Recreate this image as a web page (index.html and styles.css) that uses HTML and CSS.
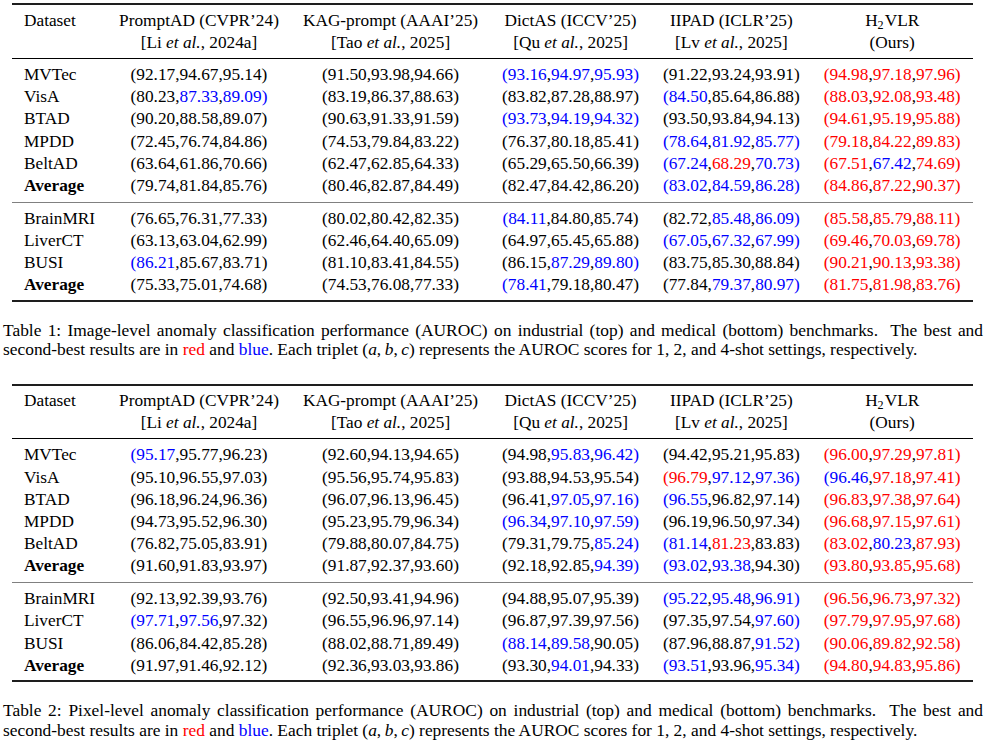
FILE: index.html
```html
<!DOCTYPE html>
<html lang="en">
<head>
<meta charset="utf-8">
<title>Anomaly classification results</title>
<link rel="stylesheet" href="styles.css">
</head>
<body>
<main class="page">

<figure class="fig">
<table class="results">
<thead>
<tr>
<th class="ds">Dataset</th>
<th>PromptAD (CVPR’24)<br>[Li <i>et al.</i>, 2024a]</th>
<th>KAG-prompt (AAAI’25)<br>[Tao <i>et al.</i>, 2025]</th>
<th>DictAS (ICCV’25)<br>[Qu <i>et al.</i>, 2025]</th>
<th>IIPAD (ICLR’25)<br>[Lv <i>et al.</i>, 2025]</th>
<th>H<sub>2</sub>VLR<br>(Ours)</th>
</tr>
</thead>
<tbody class="ind">
<tr><td class="ds">MVTec</td><td>(92.17,94.67,95.14)</td><td>(91.50,93.98,94.66)</td><td><span class="b">(93.16</span>,<span class="b">94.97</span>,<span class="b">95.93)</span></td><td>(91.22,93.24,93.91)</td><td><span class="r">(94.98</span>,<span class="r">97.18</span>,<span class="r">97.96)</span></td></tr>
<tr><td class="ds">VisA</td><td>(80.23,<span class="b">87.33</span>,<span class="b">89.09)</span></td><td>(83.19,86.37,88.63)</td><td>(83.82,87.28,88.97)</td><td><span class="b">(84.50</span>,85.64,86.88)</td><td><span class="r">(88.03</span>,<span class="r">92.08</span>,<span class="r">93.48)</span></td></tr>
<tr><td class="ds">BTAD</td><td>(90.20,88.58,89.07)</td><td>(90.63,91.33,91.59)</td><td><span class="b">(93.73</span>,<span class="b">94.19</span>,<span class="b">94.32)</span></td><td>(93.50,93.84,94.13)</td><td><span class="r">(94.61</span>,<span class="r">95.19</span>,<span class="r">95.88)</span></td></tr>
<tr><td class="ds">MPDD</td><td>(72.45,76.74,84.86)</td><td>(74.53,79.84,83.22)</td><td>(76.37,80.18,85.41)</td><td><span class="b">(78.64</span>,<span class="b">81.92</span>,<span class="b">85.77)</span></td><td><span class="r">(79.18</span>,<span class="r">84.22</span>,<span class="r">89.83)</span></td></tr>
<tr><td class="ds">BeltAD</td><td>(63.64,61.86,70.66)</td><td>(62.47,62.85,64.33)</td><td>(65.29,65.50,66.39)</td><td><span class="b">(67.24</span>,<span class="r">68.29</span>,<span class="b">70.73)</span></td><td><span class="r">(67.51</span>,<span class="b">67.42</span>,<span class="r">74.69)</span></td></tr>
<tr class="avg"><td class="ds">Average</td><td>(79.74,81.84,85.76)</td><td>(80.46,82.87,84.49)</td><td>(82.47,84.42,86.20)</td><td><span class="b">(83.02</span>,<span class="b">84.59</span>,<span class="b">86.28)</span></td><td><span class="r">(84.86</span>,<span class="r">87.22</span>,<span class="r">90.37)</span></td></tr>
</tbody>
<tbody class="med">
<tr><td class="ds">BrainMRI</td><td>(76.65,76.31,77.33)</td><td>(80.02,80.42,82.35)</td><td><span class="b">(84.11</span>,84.80,85.74)</td><td>(82.72,<span class="b">85.48</span>,<span class="b">86.09)</span></td><td><span class="r">(85.58</span>,<span class="r">85.79</span>,<span class="r">88.11)</span></td></tr>
<tr><td class="ds">LiverCT</td><td>(63.13,63.04,62.99)</td><td>(62.46,64.40,65.09)</td><td>(64.97,65.45,65.88)</td><td><span class="b">(67.05</span>,<span class="b">67.32</span>,<span class="b">67.99)</span></td><td><span class="r">(69.46</span>,<span class="r">70.03</span>,<span class="r">69.78)</span></td></tr>
<tr><td class="ds">BUSI</td><td><span class="b">(86.21</span>,85.67,83.71)</td><td>(81.10,83.41,84.55)</td><td>(86.15,<span class="b">87.29</span>,<span class="b">89.80)</span></td><td>(83.75,85.30,88.84)</td><td><span class="r">(90.21</span>,<span class="r">90.13</span>,<span class="r">93.38)</span></td></tr>
<tr class="avg"><td class="ds">Average</td><td>(75.33,75.01,74.68)</td><td>(74.53,76.08,77.33)</td><td><span class="b">(78.41</span>,79.18,80.47)</td><td>(77.84,<span class="b">79.37</span>,<span class="b">80.97)</span></td><td><span class="r">(81.75</span>,<span class="r">81.98</span>,<span class="r">83.76)</span></td></tr>
</tbody>
</table>
<figcaption class="caption">
<p class="cap-line cap-just">Table 1: Image-level anomaly classification performance (AUROC) on industrial (top) and medical (bottom) benchmarks.&nbsp; The best and</p>
<p class="cap-line">second-best results are in <span class="r">red</span> and <span class="b">blue</span>. Each triplet (<i>a</i>,&thinsp;<i>b</i>,&thinsp;<i>c</i>) represents the AUROC scores for 1, 2, and 4-shot settings, respectively.</p>
</figcaption>
</figure>

<figure class="fig fig-next">
<table class="results">
<thead>
<tr>
<th class="ds">Dataset</th>
<th>PromptAD (CVPR’24)<br>[Li <i>et al.</i>, 2024a]</th>
<th>KAG-prompt (AAAI’25)<br>[Tao <i>et al.</i>, 2025]</th>
<th>DictAS (ICCV’25)<br>[Qu <i>et al.</i>, 2025]</th>
<th>IIPAD (ICLR’25)<br>[Lv <i>et al.</i>, 2025]</th>
<th>H<sub>2</sub>VLR<br>(Ours)</th>
</tr>
</thead>
<tbody class="ind">
<tr><td class="ds">MVTec</td><td><span class="b">(95.17</span>,95.77,96.23)</td><td>(92.60,94.13,94.65)</td><td>(94.98,<span class="b">95.83</span>,<span class="b">96.42)</span></td><td>(94.42,95.21,95.83)</td><td><span class="r">(96.00</span>,<span class="r">97.29</span>,<span class="r">97.81)</span></td></tr>
<tr><td class="ds">VisA</td><td>(95.10,96.55,97.03)</td><td>(95.56,95.74,95.83)</td><td>(93.88,94.53,95.54)</td><td><span class="r">(96.79</span>,<span class="b">97.12</span>,<span class="b">97.36)</span></td><td><span class="b">(96.46</span>,<span class="r">97.18</span>,<span class="r">97.41)</span></td></tr>
<tr><td class="ds">BTAD</td><td>(96.18,96.24,96.36)</td><td>(96.07,96.13,96.45)</td><td>(96.41,<span class="b">97.05</span>,<span class="b">97.16)</span></td><td><span class="b">(96.55</span>,96.82,97.14)</td><td><span class="r">(96.83</span>,<span class="r">97.38</span>,<span class="r">97.64)</span></td></tr>
<tr><td class="ds">MPDD</td><td>(94.73,95.52,96.30)</td><td>(95.23,95.79,96.34)</td><td><span class="b">(96.34</span>,<span class="b">97.10</span>,<span class="b">97.59)</span></td><td>(96.19,96.50,97.34)</td><td><span class="r">(96.68</span>,<span class="r">97.15</span>,<span class="r">97.61)</span></td></tr>
<tr><td class="ds">BeltAD</td><td>(76.82,75.05,83.91)</td><td>(79.88,80.07,84.75)</td><td>(79.31,79.75,<span class="b">85.24)</span></td><td><span class="b">(81.14</span>,<span class="r">81.23</span>,83.83)</td><td><span class="r">(83.02</span>,<span class="b">80.23</span>,<span class="r">87.93)</span></td></tr>
<tr class="avg"><td class="ds">Average</td><td>(91.60,91.83,93.97)</td><td>(91.87,92.37,93.60)</td><td>(92.18,92.85,<span class="b">94.39)</span></td><td><span class="b">(93.02</span>,<span class="b">93.38</span>,94.30)</td><td><span class="r">(93.80</span>,<span class="r">93.85</span>,<span class="r">95.68)</span></td></tr>
</tbody>
<tbody class="med">
<tr><td class="ds">BrainMRI</td><td>(92.13,92.39,93.76)</td><td>(92.50,93.41,94.96)</td><td>(94.88,95.07,95.39)</td><td><span class="b">(95.22</span>,<span class="b">95.48</span>,<span class="b">96.91)</span></td><td><span class="r">(96.56</span>,<span class="r">96.73</span>,<span class="r">97.32)</span></td></tr>
<tr><td class="ds">LiverCT</td><td><span class="b">(97.71</span>,<span class="b">97.56</span>,97.32)</td><td>(96.55,96.96,97.14)</td><td>(96.87,97.39,97.56)</td><td>(97.35,97.54,<span class="b">97.60)</span></td><td><span class="r">(97.79</span>,<span class="r">97.95</span>,<span class="r">97.68)</span></td></tr>
<tr><td class="ds">BUSI</td><td>(86.06,84.42,85.28)</td><td>(88.02,88.71,89.49)</td><td><span class="b">(88.14</span>,<span class="b">89.58</span>,90.05)</td><td>(87.96,88.87,<span class="b">91.52)</span></td><td><span class="r">(90.06</span>,<span class="r">89.82</span>,<span class="r">92.58)</span></td></tr>
<tr class="avg"><td class="ds">Average</td><td>(91.97,91.46,92.12)</td><td>(92.36,93.03,93.86)</td><td>(93.30,<span class="b">94.01</span>,94.33)</td><td><span class="b">(93.51</span>,93.96,<span class="b">95.34)</span></td><td><span class="r">(94.80</span>,<span class="r">94.83</span>,<span class="r">95.86)</span></td></tr>
</tbody>
</table>
<figcaption class="caption">
<p class="cap-line cap-just">Table 2: Pixel-level anomaly classification performance (AUROC) on industrial (top) and medical (bottom) benchmarks.&nbsp; The best and</p>
<p class="cap-line">second-best results are in <span class="r">red</span> and <span class="b">blue</span>. Each triplet (<i>a</i>,&thinsp;<i>b</i>,&thinsp;<i>c</i>) represents the AUROC scores for 1, 2, and 4-shot settings, respectively.</p>
</figcaption>
</figure>

</main>
</body>
</html>
```
FILE: styles.css
```css
html, body {
  margin: 0;
  padding: 0;
  background: #ffffff;
  color: #000000;
  font-family: "Liberation Serif", "Times New Roman", serif;
}

.page {
  padding-top: 3px;
}

.fig {
  margin: 0;
}

.fig-next {
  margin-top: 24px;
}

.results {
  border-collapse: separate;
  border-spacing: 0;
  margin-left: 12px;
  font-size: 17.3px;
  line-height: 22.2px;
}

.results th,
.results td {
  padding: 0 12px;
  text-align: center;
  font-weight: normal;
  white-space: nowrap;
}

.results .ds {
  text-align: left;
}

.results thead th {
  vertical-align: top;
  border-top: 2px solid #1e1e1e;
  border-bottom: 1px solid #000000;
  padding-top: 4.5px;
  padding-bottom: 4px;
}

.results sub {
  font-size: 0.7em;
  line-height: 0;
  vertical-align: -0.28em;
  padding-right: 1px;
}

.ind tr:first-child td {
  padding-top: 5px;
}

.ind tr:last-child td {
  padding-bottom: 4.5px;
}

.med tr:first-child td {
  border-top: 1px solid #808080;
  padding-top: 5px;
}

.med tr:last-child td {
  border-bottom: 2px solid #1e1e1e;
  padding-bottom: 3.5px;
}

.avg .ds {
  font-weight: bold;
}

.r {
  color: #ff0000;
}

.b {
  color: #0000ff;
}

.caption {
  margin: 19px 3px 0 3px;
  font-size: 17.4px;
  line-height: 19.3px;
}

.cap-line {
  margin: 0;
  white-space: nowrap;
}

.cap-just {
  white-space: normal;
  text-align: justify;
  text-align-last: justify;
}
```
